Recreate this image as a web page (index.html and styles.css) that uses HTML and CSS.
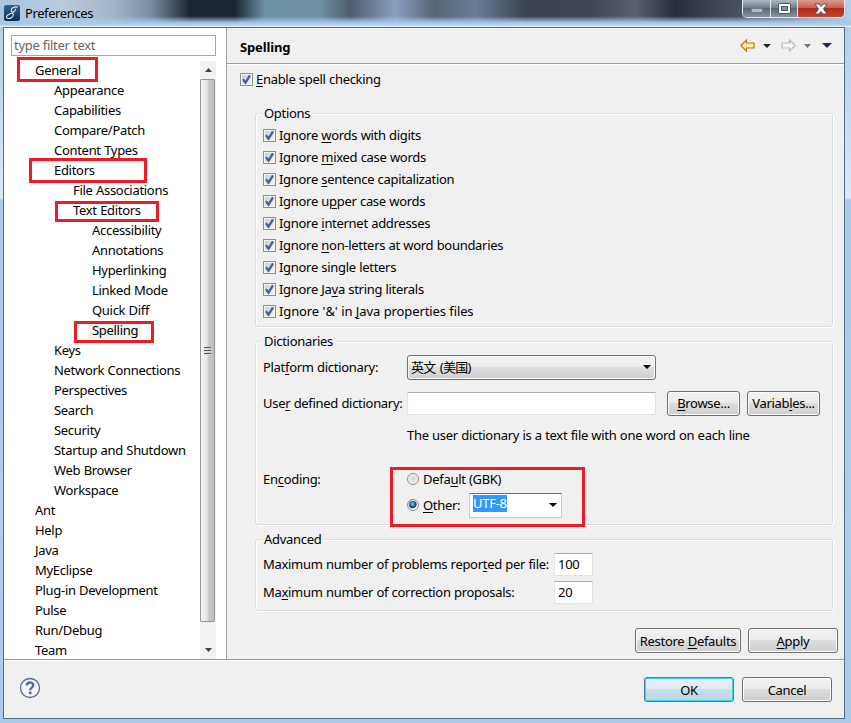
FILE: index.html
```
<!DOCTYPE html>
<html lang="en">
<head>
<meta charset="utf-8">
<title>Preferences</title>
<link rel="stylesheet" href="styles.css">
</head>
<body>
<svg width="0" height="0" class="defs"><symbol id="tick" viewBox="0 0 11 11"><path d="M2 5.200L4.500 8.700L9 1.400" fill="none" stroke="#4a5f97" stroke-width="2.300"/></symbol></svg>
<div class="window">
  <header class="titlebar">
    <svg class="app-icon" width="16" height="16" viewBox="0 0 16 16"><defs><linearGradient id="app" x1="0" y1="0" x2="0" y2="1"><stop offset="0" stop-color="#31648f"/><stop offset="1" stop-color="#0c2c58"/></linearGradient></defs><rect width="16" height="16" rx="2" fill="url(#app)"/><path d="M13.800 2.200C10.500 1.300 7.200 2.800 7.200 5.200C7.200 7.600 9.800 7.600 9.300 10C8.800 12.800 5.800 14 3.500 13.300C1.500 12.500 2.500 10.400 4.800 9.400C8 8 11 7 11.700 3.800" fill="none" stroke="#e8f0f8" stroke-width="1.1"/></svg>
    <span class="title">Preferences</span>
    <div class="controls">
      <div class="ctl min"><svg width="12" height="6"><rect x=".5" y=".5" width="11" height="4" fill="#b8bcc2" stroke="#777d87"/></svg></div>
      <div class="ctl max"><svg width="13" height="11"><rect x=".5" y=".5" width="12" height="10" rx="1" fill="#fff" stroke="#4c5365"/><rect x="3.500" y="3.500" width="6" height="4" fill="#8a929f" stroke="#4c5365"/></svg></div>
      <div class="ctl close"><svg width="14" height="12" viewBox="0 0 14 12"><path d="M1 1H5L7 3.500L9 1H13L9.500 6L13 11H9L7 8.500L5 11H1L4.500 6Z" fill="#fff" stroke="#515468"/></svg></div>
    </div>
  </header>
  <main class="client">
    <div class="upper">
      <aside class="nav">
        <div class="filter"><span class="t">type filter text</span></div>
        <div class="treewrap">
          <ul class="tree">
            <li class="l0"><span>General</span><i class="mark m-general"></i></li>
            <li class="l1"><span>Appearance</span></li>
            <li class="l1"><span>Capabilities</span></li>
            <li class="l1"><span>Compare/Patch</span></li>
            <li class="l1"><span>Content Types</span></li>
            <li class="l1"><span>Editors</span><i class="mark m-editors"></i></li>
            <li class="l2"><span>File Associations</span></li>
            <li class="l2"><span>Text Editors</span><i class="mark m-text"></i></li>
            <li class="l3"><span>Accessibility</span></li>
            <li class="l3"><span>Annotations</span></li>
            <li class="l3"><span>Hyperlinking</span></li>
            <li class="l3"><span>Linked Mode</span></li>
            <li class="l3"><span>Quick Diff</span></li>
            <li class="l3"><span class="selected">Spelling</span><i class="mark m-spelling"></i></li>
            <li class="l1"><span>Keys</span></li>
            <li class="l1"><span>Network Connections</span></li>
            <li class="l1"><span>Perspectives</span></li>
            <li class="l1"><span>Search</span></li>
            <li class="l1"><span>Security</span></li>
            <li class="l1"><span>Startup and Shutdown</span></li>
            <li class="l1"><span>Web Browser</span></li>
            <li class="l1"><span>Workspace</span></li>
            <li class="l0"><span>Ant</span></li>
            <li class="l0"><span>Help</span></li>
            <li class="l0"><span>Java</span></li>
            <li class="l0"><span>MyEclipse</span></li>
            <li class="l0"><span>Plug-in Development</span></li>
            <li class="l0"><span>Pulse</span></li>
            <li class="l0"><span>Run/Debug</span></li>
            <li class="l0"><span>Team</span></li>
          </ul>
          <div class="scroll">
            <svg class="sarrow" width="7" height="4"><path d="M0 4L3.500 0L7 4Z" fill="#444"/></svg>
            <div class="thumb"><i></i><i></i><i></i></div>
            <svg class="sarrow down" width="7" height="4"><path d="M0 0L3.500 4L7 0Z" fill="#444"/></svg>
          </div>
        </div>
      </aside>
      <section class="page">
        <div class="head">
          <h1>Spelling</h1>
          <div class="history">
            <svg width="15" height="13" viewBox="0 0 15 13"><path d="M.8 6.500L6.500 1V4H14V9H6.500V12Z" fill="#fff0a8" stroke="#b8790a" stroke-width="1.200"/></svg>
            <svg class="a1" width="8" height="4"><path d="M0 0H8L4 4Z" fill="#222"/></svg>
            <svg class="a2" width="15" height="13" viewBox="0 0 15 13"><path d="M14.200 6.500L8.500 1V4H1V9H8.500V12Z" fill="#f6f6f4" stroke="#b9b9b4" stroke-width="1.200"/></svg>
            <svg class="a3" width="7" height="4"><path d="M0 0H7L3.500 4Z" fill="#777"/></svg>
            <svg class="a4" width="10" height="5"><path d="M0 0H10L5 5Z" fill="#27256a"/></svg>
          </div>
        </div>
        <div class="body">
          <label class="check"><svg class="box"><use href="#tick"/></svg><span><u>E</u>nable spell checking</span></label>
          <fieldset class="options">
            <legend>Options</legend>
            <label class="check"><svg class="box"><use href="#tick"/></svg><span>Ignore <u>w</u>ords with digits</span></label>
            <label class="check"><svg class="box"><use href="#tick"/></svg><span>Ignore <u>m</u>ixed case words</span></label>
            <label class="check"><svg class="box"><use href="#tick"/></svg><span>Ignore <u>s</u>entence capitalization</span></label>
            <label class="check"><svg class="box"><use href="#tick"/></svg><span>Ignore u<u>p</u>per case words</span></label>
            <label class="check"><svg class="box"><use href="#tick"/></svg><span>Ignore <u>i</u>nternet addresses</span></label>
            <label class="check"><svg class="box"><use href="#tick"/></svg><span>Ignore <u>n</u>on-letters at word boundaries</span></label>
            <label class="check"><svg class="box"><use href="#tick"/></svg><span>I<u>g</u>nore single letters</span></label>
            <label class="check"><svg class="box"><use href="#tick"/></svg><span>Ignore Ja<u>v</u>a string literals</span></label>
            <label class="check loose"><svg class="box"><use href="#tick"/></svg><span>Ignore '&amp;' in <u>J</u>ava properties files</span></label>
          </fieldset>
          <fieldset class="dicts">
            <legend>Dictionaries</legend>
            <div class="row r1"><span class="lab">Plat<u>f</u>orm dictionary:</span><div class="combo"><span>英文 (美国)</span><svg width="8" height="4"><path d="M0 0H8L4 4Z"/></svg></div></div>
            <div class="row r2"><span class="lab">Use<u>r</u> defined dictionary:</span><div class="input wide"></div><div class="btn browse"><span><u>B</u>rowse...</span></div><div class="btn vars"><span>Variab<u>l</u>es...</span></div></div>
            <div class="row r3"><span class="lab"></span><span>The user dictionary is a text file with one word on each line</span></div>
            <div class="row r4"><span class="lab">En<u>c</u>oding:</span><b class="radio"></b><span>Defa<u>u</u>lt (GBK)</span></div>
            <div class="row r5"><span class="lab"></span><b class="radio on"></b><span class="other"><u>O</u>ther:</span><div class="edit"><span class="hl">UTF-8</span><svg width="8" height="4"><path d="M0 0H8L4 4Z"/></svg></div></div>
            <i class="mark m-encoding"></i>
          </fieldset>
          <fieldset class="advanced">
            <legend>Advanced</legend>
            <div class="row"><span class="alab">Maximum number of problems repor<u>t</u>ed per file:</span><div class="input num"><span>100</span></div></div>
            <div class="row"><span class="alab">Ma<u>x</u>imum number of correction proposals:</span><div class="input num"><span>20</span></div></div>
          </fieldset>
          <div class="actions"><div class="btn restore"><span>Restore <u>D</u>efaults</span></div><div class="btn apply"><span><u>A</u>pply</span></div></div>
        </div>
      </section>
    </div>
    <footer class="foot">
      <svg class="help" width="22" height="22" viewBox="0 0 22 22"><circle cx="11" cy="11" r="9.500" fill="#f4f5f8" stroke="#5a6a8a" stroke-width="1.300"/><path d="M7.800 8.500C7.800 4.500 14.200 4.500 14.200 8.300C14.200 10.800 11.200 10.500 11.200 13.200" fill="none" stroke="#5a6a92" stroke-width="2.400"/><rect x="9.900" y="14.600" width="2.600" height="2.600" fill="#5a6a92"/></svg>
      <div class="btn ok"><span>OK</span></div>
      <div class="btn cancel"><span>Cancel</span></div>
    </footer>
  </main>
</div>
</body>
</html>
```
FILE: styles.css
```
* { box-sizing: border-box; }
body { margin: 0; width: 851px; height: 723px; overflow: hidden; font: 13px/20px "Noto Sans", "Noto Sans CJK SC", sans-serif; letter-spacing: -0.3px; word-spacing: 0.3px; color: #000; }
u { text-decoration: underline; text-decoration-thickness: 1px; text-underline-offset: 2px; }
svg { display: block; flex: none; }
.defs { position: absolute; }
.window { width: 851px; height: 723px; padding: 0 6px 4px 3px; background: linear-gradient(#b4cde8, #bdd4ee 80px, #dbe9f8 198px, #a9c8ea 200px, #b0cdee 500px, #abcaeb); display: flex; flex-direction: column; }
.titlebar { height: 27px; margin: 0 -6px 0 -3px; padding-left: 4px; display: flex; background: linear-gradient(transparent 60%, #a9c8ea 85%, #a9c8ea 94%, #e3effb 95%), linear-gradient(90deg, #a9c4df 0, #b9cbdd 60px, #a5b7c9 110px, #7d8ea3 150px, #1d2634 190px, #1d2634 235px, #6b92a5 265px, #6f8f9f 320px, #4e5d6c 350px, #8b9fc0 395px, #576472 435px, #6b7d98 475px, #3b424f 525px, #3f4552 590px, #596070 635px, #272f3e 675px, #4a515e 740px, #a9c4e2 842px, #bad2ec); }
.app-icon { margin-top: 5px; }
.title { margin: 3px 0 0 5px; width: 717px; white-space: nowrap; letter-spacing: -0.4px; }
.controls { display: flex; width: 103px; height: 18px; border: 1px solid #e0e7ef; border-top: 0; border-radius: 0 0 5px 5px; overflow: hidden; }
.ctl { display: flex; justify-content: center; padding-top: 3px; background: linear-gradient(#aeb8c5, #737e8c 45%, #56616f 46%, #8995a4); border-right: 1px solid #dfe5ec; width: 28px; }
.min { padding-top: 8px; }
.max { width: 27px; }
.close { flex: 1; border: 0; background: linear-gradient(#db9c8c, #c7604d 45%, #ae2a17 46%, #c5452c); }
.client { flex: 1; border: 1px solid #566b85; background: #f0f0f0; display: flex; flex-direction: column; }
.upper { height: 632px; display: flex; border-bottom: 1px solid #9b9b9b; }
.nav { width: 223px; background: #fff; border-right: 1px solid #a0a0a0; padding: 7px 0 0 7px; }
.filter { width: 205px; height: 21px; border: 1px solid #a5a5a5; padding-left: 2px; color: #666; line-height: 19px; }
.treewrap { display: flex; margin-top: 5px; height: 598px; }
.tree { list-style: none; margin: 0; padding: 0; width: 189px; height: 598px; line-height: 18px; }
.tree li { position: relative; height: 20px; white-space: nowrap; }
.l0 { padding-left: 24px; }
.l1 { padding-left: 43px; }
.l2 { padding-left: 62px; }
.l3 { padding-left: 81px; }
.selected { display: inline-block; height: 18px; vertical-align: top; background: #f2f2f2; box-shadow: -4px 0 #f2f2f2, 4px 0 #f2f2f2; }
.mark { position: absolute; border: 3px solid #ed1c24; z-index: 2; }
.m-general { left: 6px; top: -4px; width: 81px; height: 25px; }
.m-editors { left: 18px; top: -3px; width: 118px; height: 25px; }
.m-text { left: 44px; top: 0; width: 104px; height: 21px; }
.m-spelling { left: 63px; top: 0; width: 80px; height: 22px; }
.m-encoding { left: 134px; top: 125px; width: 195px; height: 60px; }
.scroll { width: 16px; background: #f1f1f1; display: flex; flex-direction: column; align-items: center; padding: 7px 0; }
.thumb { width: 15px; height: 544px; margin: 7px 1px 0 0; border: 1px solid #989898; border-radius: 1px; background: linear-gradient(90deg, #f5f5f5, #e6e6e6 45%, #c5c7cb 60%, #bcbfc4); display: flex; flex-direction: column; align-items: center; justify-content: center; gap: 1px; }
.thumb i { width: 7px; height: 2px; background: #555; border-bottom: 1px solid #ddd; }
.down { margin-top: 26px; }
.page { flex: 1; }
.head { height: 36px; border-bottom: 1px solid #a0a0a0; box-shadow: 0 1px #fff; display: flex; padding-left: 13px; }
h1 { margin: 9px 0 0; font-size: 13px; line-height: 20px; width: 500px; letter-spacing: -0.15px; }
.history { display: flex; align-items: center; }
.a1 { margin-left: 8px; }
.a2 { margin-left: 10px; }
.a3 { margin-left: 8px; }
.a4 { margin-left: 11px; }
.body { padding: 4px 0 0 13px; }
.check { display: flex; height: 22px; align-items: center; white-space: nowrap; }
.loose { letter-spacing: -0.12px; }
.box { width: 13px; height: 13px; border: 1px solid #8e8f8f; background: linear-gradient(135deg, #c6cbd2, #f6f6f6); box-shadow: inset 0 0 0 1px #f4f4f4; margin-right: 3px; overflow: visible; }
fieldset { position: relative; margin: 0 0 0 15px; padding: 0; border: 1px solid #d5dfe5; border-radius: 3px; box-shadow: inset 1px 1px #fff, 1px 1px #fff; width: 578px; }
legend { position: absolute; top: -11px; left: 6px; padding: 0 2px; background: #f0f0f0; line-height: 20px; }
.options { height: 214px; margin-top: 23px; padding: 10px 0 0 7px; }
.dicts { height: 184px; margin-top: 14px; padding: 12px 0 0 7px; }
.row { display: flex; align-items: center; white-space: nowrap; }
.lab { width: 144px; }
.r1 { height: 26px; }
.r2 { height: 26px; margin-top: 10px; }
.r3 { height: 20px; margin-top: 9px; }
.r4 { height: 22px; margin-top: 23px; }
.r5 { height: 26px; margin-top: 2px; }
.combo { width: 249px; height: 25px; border: 1px solid #707070; border-radius: 3px; background: linear-gradient(#f2f2f2, #ebebeb 49%, #ddd 50%, #cfcfcf); box-shadow: inset 0 0 0 1px #fbfbfb; display: flex; align-items: center; justify-content: space-between; padding: 0 4px 0 3px; letter-spacing: -0.7px; word-spacing: 1.5px; }
.input { background: #fff; border: 1px solid #e2e3ea; border-top-color: #abadb3; height: 23px; }
.wide { width: 249px; }
.btn { height: 25px; border: 1px solid #707070; border-radius: 3px; background: linear-gradient(#f2f2f2, #ebebeb 49%, #ddd 50%, #cfcfcf); box-shadow: inset 0 0 0 1px #fbfbfb; display: flex; align-items: center; justify-content: center; white-space: nowrap; }
.browse { width: 73px; margin-left: 11px; letter-spacing: -0.3px; }
.vars { width: 73px; margin-left: 7px; }
.radio { width: 12px; height: 12px; border-radius: 50%; border: 1px solid #8e8f8f; background: radial-gradient(#d5d5d5, #f5f5f5); box-shadow: inset 0 0 0 1px #f4f4f4; margin-right: 4px; }
.radio.on { background: radial-gradient(circle at 45% 40%, #8dd6f5 0, #2d7fae 25%, #173e60 45%, #e9edf0 58%); }
.other { width: 46px; }
.edit { width: 93px; height: 25px; border: 1px solid #b5cfe7; border-top-color: #3d7bad; background: #fff; display: flex; align-items: center; justify-content: space-between; padding: 0 4px 0 3px; }
.hl { background: #3399ff; color: #fff; height: 17px; line-height: 17px; margin-top: -3px; }
.advanced { height: 72px; margin-top: 14px; padding: 10px 0 0 7px; }
.advanced .row { height: 28px; }
.alab { width: 291px; }
.num { width: 39px; padding-left: 3px; }
.actions { display: flex; margin: 17px 0 0 395px; }
.restore { width: 106px; }
.apply { width: 90px; margin-left: 7px; }
.foot { flex: 1; display: flex; align-items: flex-start; padding: 17px 0 0 15px; box-shadow: inset 0 1px #fff; }
.ok { width: 90px; margin-left: 603px; border-color: #3c7fb1; background: linear-gradient(#eaf3f8, #dceaf2 49%, #c8dfea 50%, #bcd5e2); box-shadow: inset 0 0 0 1px #39d0fb; }
.cancel { width: 90px; margin-left: 8px; }
```
